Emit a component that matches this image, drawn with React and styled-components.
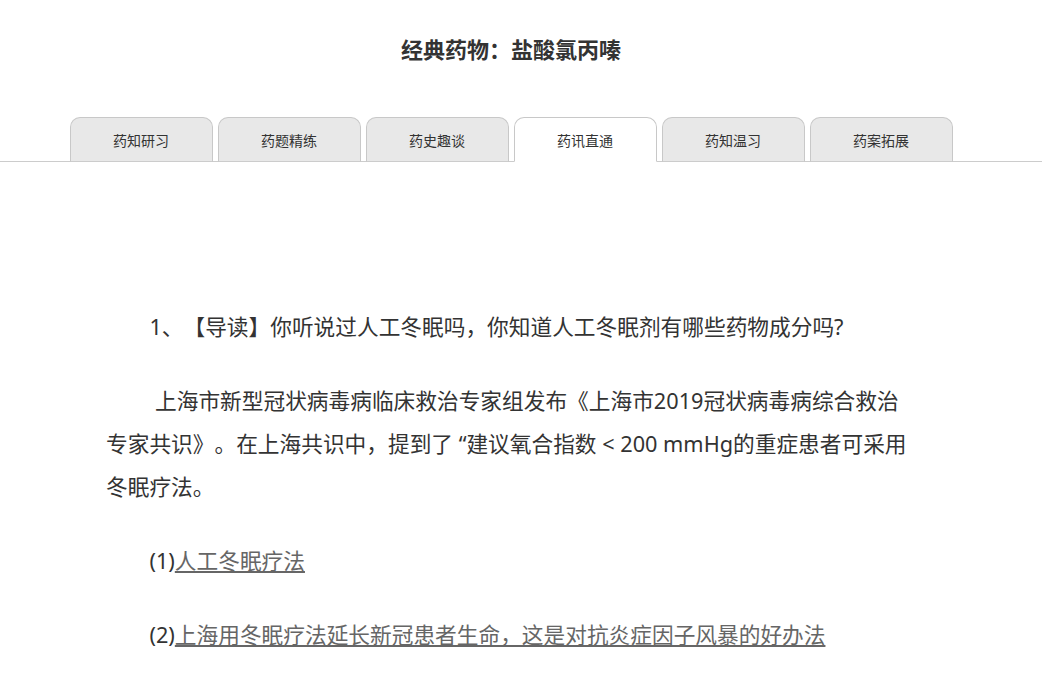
import React from "react";
import styled, { createGlobalStyle } from "styled-components";

const tabs = ["药知研习", "药题精练", "药史趣谈", "药讯直通", "药知温习", "药案拓展"];
const activeTab = 3;

export default function App() {
  return (
    <>
      <GlobalStyle />
      <Header>
        <Title>经典药物：盐酸氯丙嗪</Title>
      </Header>
      <TabBar>
        <TabRow>
          {tabs.map((t, i) => (
            <Tab key={t} active={i === activeTab}>
              {t}
            </Tab>
          ))}
        </TabRow>
      </TabBar>
      <Main>
        <Article>
          <Para>1、【导读】你听说过人工冬眠吗，你知道人工冬眠剂有哪些药物成分吗?</Para>
          <Para>
            &nbsp;上海市新型冠状病毒病临床救治专家组发布《上海市2019冠状病毒病综合救治专家共识》。在上海共识中，提到了
            “建议氧合指数 &lt; 200 mmHg的重症患者可采用冬眠疗法。
          </Para>
          <Para>
            (1)<LinkText href="#">人工冬眠疗法</LinkText>
          </Para>
          <Para>
            (2)<LinkText href="#">上海用冬眠疗法延长新冠患者生命，这是对抗炎症因子风暴的好办法</LinkText>
          </Para>
        </Article>
      </Main>
    </>
  );
}

// Styles
const GlobalStyle = createGlobalStyle`
  body {
    margin: 0;
    background: #ffffff;
    color: #333333;
    font-family: "Noto Sans", "Noto Sans CJK SC", sans-serif;
    text-spacing-trim: space-all;
  }
`;

const Header = styled.div`
  max-width: 1022px;
  padding-top: 34px;
  padding-bottom: 53px;
  text-align: center;
`;

const Title = styled.h1`
  margin: 0;
  font-size: 22px;
  line-height: 30px;
  font-weight: 700;
  color: #333333;
`;

const TabBar = styled.div`
  border-bottom: 1px solid #cccccc;
`;

const TabRow = styled.div`
  max-width: 1022px;
  display: flex;
  justify-content: center;
  gap: 5px;
`;

const Tab = styled.div`
  box-sizing: border-box;
  width: 143px;
  height: 45px;
  margin-bottom: -1px;
  display: flex;
  align-items: center;
  justify-content: center;
  font-size: 14px;
  color: #333333;
  background: ${(props) => (props.active ? "#ffffff" : "#e8e8e8")};
  border: 1px solid #c8c8c8;
  border-bottom: ${(props) => (props.active ? "1px solid #ffffff" : "1px solid #cccccc")};
  border-radius: 10px 10px 0 0;
  cursor: pointer;
`;

const Main = styled.div`
  max-width: 1022px;
`;

const Article = styled.div`
  width: 810px;
  margin: 0 auto;
  padding: 143px 0 40px;
`;

const Para = styled.p`
  margin: 0 0 31px;
  font-size: 21.7px;
  line-height: 43px;
  text-indent: 2em;
  color: #333333;
`;

const LinkText = styled.a`
  color: #666666;
  text-decoration: underline;
`;
